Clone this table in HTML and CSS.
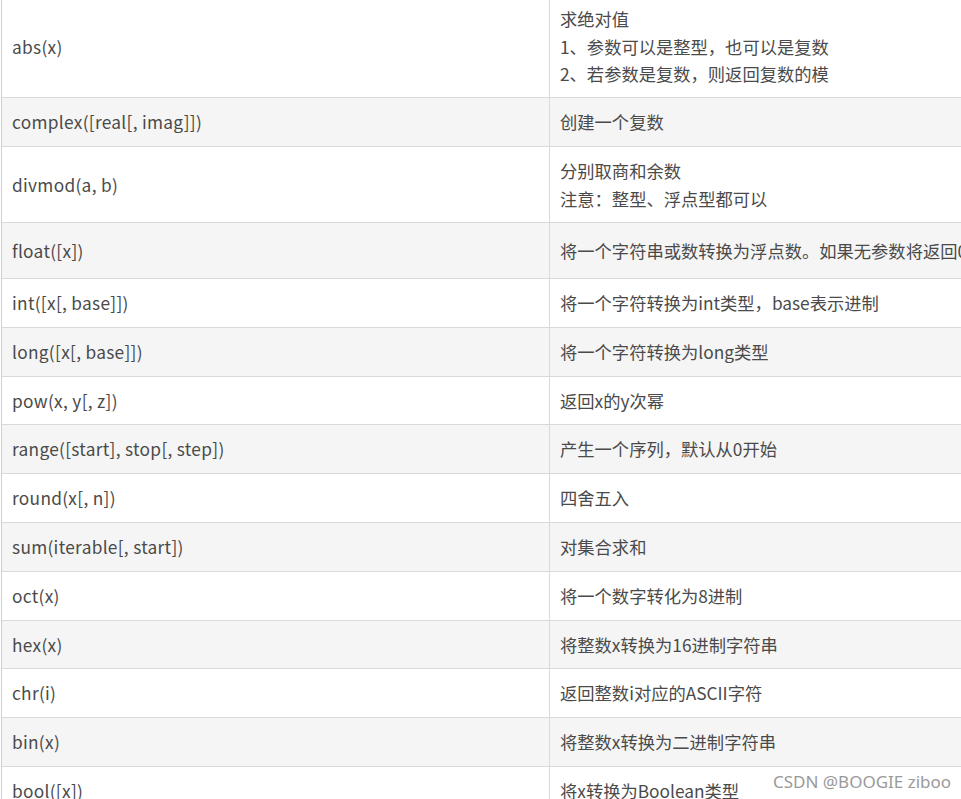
FILE: index.html
```html
<!DOCTYPE html>
<html lang="zh-CN">
<head>
<meta charset="utf-8">
<title>Python 内置函数</title>
<link rel="stylesheet" href="styles.css">
</head>
<body>
<div class="table">
  <div class="row h102"><div class="fn">abs(x)</div><div class="desc">求绝对值<br>1、参数可以是整型，也可以是复数<br>2、若参数是复数，则返回复数的模</div></div>
  <div class="row h49"><div class="fn">complex([real[, imag]])</div><div class="desc">创建一个复数</div></div>
  <div class="row h76"><div class="fn">divmod(a, b)</div><div class="desc">分别取商和余数<br>注意：整型、浮点型都可以</div></div>
  <div class="row h56"><div class="fn">float([x])</div><div class="desc nowrap">将一个字符串或数转换为浮点数。如果无参数将返回0.0</div></div>
  <div class="row h49"><div class="fn">int([x[, base]])</div><div class="desc">将一个字符转换为int类型，base表示进制</div></div>
  <div class="row h49"><div class="fn">long([x[, base]])</div><div class="desc">将一个字符转换为long类型</div></div>
  <div class="row h48"><div class="fn">pow(x, y[, z])</div><div class="desc">返回x的y次幂</div></div>
  <div class="row h49"><div class="fn">range([start], stop[, step])</div><div class="desc">产生一个序列，默认从0开始</div></div>
  <div class="row h49"><div class="fn">round(x[, n])</div><div class="desc">四舍五入</div></div>
  <div class="row h49"><div class="fn">sum(iterable[, start])</div><div class="desc">对集合求和</div></div>
  <div class="row h49"><div class="fn">oct(x)</div><div class="desc">将一个数字转化为8进制</div></div>
  <div class="row h48"><div class="fn">hex(x)</div><div class="desc">将整数x转换为16进制字符串</div></div>
  <div class="row h49"><div class="fn">chr(i)</div><div class="desc">返回整数i对应的ASCII字符</div></div>
  <div class="row h49"><div class="fn">bin(x)</div><div class="desc">将整数x转换为二进制字符串</div></div>
  <div class="row h49"><div class="fn">bool([x])</div><div class="desc">将x转换为Boolean类型</div></div>
</div>
<div class="watermark">CSDN @BOOGIE ziboo</div>
</body>
</html>
```

FILE: styles.css
```css
html, body {
  margin: 0;
  padding: 0;
  background: #ffffff;
  overflow: hidden;
  height: 799px;
}
body {
  position: relative;
  font-family: "Noto Sans CJK SC", "Noto Sans", sans-serif;
  font-size: 17.3px;
  color: #4a4a4a;
}
.table {
  margin: -5px 0 0 1px;
  width: 1200px;
  border-top: 1px solid #d9d9d9;
  border-left: 1px solid #d0d0d0;
}
.row {
  display: grid;
  grid-template-columns: 548px 1fr;
  border-bottom: 1px solid #d9d9d9;
  box-sizing: border-box;
}
.row:nth-child(even) {
  background: #f5f5f5;
}
.fn, .desc {
  display: flex;
  flex-direction: column;
  justify-content: center;
  padding: 0 10px;
  line-height: 27.5px;
}
.fn {
  border-right: 1px solid #d9d9d9;
  letter-spacing: 0.3px;
}
.nowrap {
  white-space: nowrap;
}
.h102 { height: 102px; }
.h49 { height: 49px; }
.h48 { height: 48px; }
.h76 { height: 76px; }
.h56 { height: 56px; }
.watermark {
  position: absolute;
  left: 773px;
  top: 770px;
  font-family: "Noto Sans", "Liberation Sans", sans-serif;
  font-size: 17px;
  color: #9a9a9a;
  line-height: 24px;
}
```
